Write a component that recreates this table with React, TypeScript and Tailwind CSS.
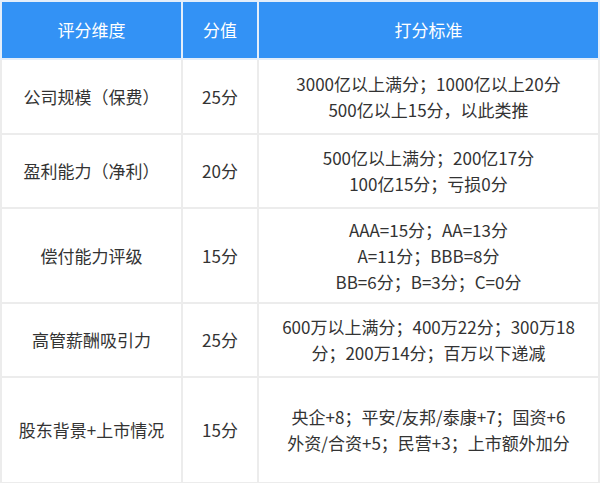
import React from "react";

const rows = [
  { name: "公司规模（保费）", score: "25分", rule: ["3000亿以上满分；1000亿以上20分", "500亿以上15分，以此类推"], h: "h-[75px]" },
  { name: "盈利能力（净利）", score: "20分", rule: ["500亿以上满分；200亿17分", "100亿15分；亏损0分"], h: "h-[74px]" },
  { name: "偿付能力评级", score: "15分", rule: ["AAA=15分；AA=13分", "A=11分；BBB=8分", "BB=6分；B=3分；C=0分"], h: "h-[95px]" },
  { name: "高管薪酬吸引力", score: "25分", rule: ["600万以上满分；400万22分；300万18", "分；200万14分；百万以下递减"], h: "h-[74px]" },
  { name: "股东背景+上市情况", score: "15分", rule: ["央企+8；平安/友邦/泰康+7；国资+6", "外资/合资+5；民营+3；上市额外加分"], h: "h-[106px]" },
];

export default function App() {
  return (
    <div className="w-[600px] h-[483px] bg-white font-['Noto_Sans_CJK_SC','Noto_Sans',sans-serif] text-[17px] leading-[26px] text-[#333]">
      <table className="w-[600px] border-collapse table-fixed border border-[#dadada] border-b-2 border-b-[#b8b8b8]">
        <colgroup>
          <col className="w-[181px]" />
          <col className="w-[76px]" />
          <col />
        </colgroup>
        <thead>
          {/* 表头 */}
          <tr className="h-[58px] bg-[#3392f5] text-white">
            <th className="font-normal border-2 border-[#e4eefa]">评分维度</th>
            <th className="font-normal border-2 border-[#e4eefa]">分值</th>
            <th className="font-normal border-2 border-[#e4eefa]">打分标准</th>
          </tr>
        </thead>
        <tbody>
          {rows.map((r) => (
            <tr key={r.name} className={r.h}>
              <td className="text-center border-2 border-[#ececec]">{r.name}</td>
              <td className="text-center border-2 border-[#ececec]">{r.score}</td>
              <td className="text-center border-2 border-[#ececec] whitespace-nowrap">
                {r.rule.map((line) => (
                  <div key={line}>{line}</div>
                ))}
              </td>
            </tr>
          ))}
        </tbody>
      </table>
    </div>
  );
}
